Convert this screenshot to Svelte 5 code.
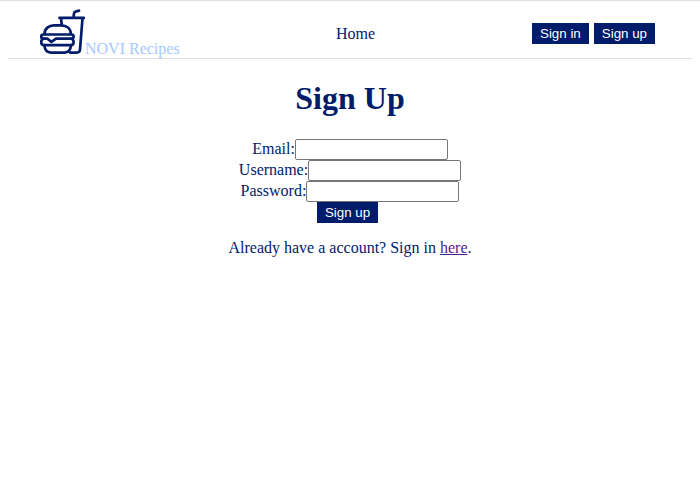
<script>
  const fields = [
    { id: 'email', label: 'Email:', type: 'email' },
    { id: 'username', label: 'Username:', type: 'text' },
    { id: 'password', label: 'Password:', type: 'password' }
  ];
</script>

<div class="page">
  <nav>
    <a class="brand" href="#home">
      <svg width="45" height="45" viewBox="0 0 45 45" aria-hidden="true">
        <path d="M39 1.6 35.6 2.6Q34.1 3.2 33.9 4.8L33.6 8.5M19.5 8.9H44M21 9.5 21.7 15M42.5 9.5 40 40.5Q39.8 43.6 36.8 43.6H30" />
        <path d="M4.5 25C4.5 19.5 9 16.4 14 16.4H21C26.5 16.4 30.8 19.5 30.8 25" />
        <path d="M3.3 25.5H31.5Q33.6 25.5 33.6 27.6T31.5 29.7H16L11.4 32.9 7.5 29.7H3.3Q1.2 29.7 1.2 27.6T3.3 25.5Z" />
        <path d="M3.3 29.7Q1.2 30.4 1.2 33Q1.2 36.2 4.2 36.2H30.7Q33.6 36.2 33.6 33Q33.6 30.4 31.5 29.7" />
        <path d="M4.3 36.2Q5 43.6 11 43.6H24.5Q30.3 43.6 31 36.2" />
      </svg><span>NOVI Recipes</span>
    </a>
    <a class="home" href="#home">Home</a>
    <div class="actions">
      <button>Sign in</button><button>Sign up</button>
    </div>
  </nav>
  <main>
    <h1>Sign Up</h1>
    <form>
      {#each fields as field}
        <div class="row">
          <label for={field.id}>{field.label}</label><input id={field.id} type={field.type} />
        </div>
      {/each}
      <div class="row"><button type="button">Sign up</button></div>
    </form>
    <p>Already have a account? Sign in <a href="#signin">here</a>.</p>
  </main>
</div>

<style>
  .page {
    box-sizing: border-box;
    height: 501px;
    padding: 0 8px;
    border-top: 1px solid #dedede;
    background: #fff;
    color: #001c6b;
    font: 16px/18px "Liberation Serif", serif;
  }
  nav {
    box-sizing: border-box;
    display: flex;
    height: 58px;
    padding: 8px 32px 0;
    border-bottom: 1px solid #dcdfe5;
  }
  .brand {
    display: flex;
    width: 296px;
    color: #a6c8ff;
    text-decoration: none;
  }
  .brand span {
    padding-top: 31px;
  }
  svg {
    flex: none;
    fill: none;
    stroke: #001c6b;
    stroke-width: 2.7;
    stroke-linecap: round;
    stroke-linejoin: round;
  }
  .home {
    padding-top: 16px;
    color: #001c6b;
    text-decoration: none;
  }
  .actions {
    display: flex;
    margin-left: auto;
    padding-top: 14px;
  }
  button {
    box-sizing: border-box;
    height: 21px;
    margin: 0 5px 0 0;
    padding: 0 8px;
    border: 0;
    background: #001c6b;
    color: #fff;
    font: 13.333px/21px "Liberation Sans", sans-serif;
  }
  h1 {
    margin: 21px 0;
    font-size: 32px;
    line-height: 37px;
    text-align: center;
  }
  form {
    margin-top: 22px;
  }
  .row {
    display: flex;
    justify-content: center;
    height: 21px;
  }
  label {
    padding-top: 1px;
  }
  input {
    box-sizing: border-box;
    width: 153px;
    height: 21px;
    margin: 0;
    border: 1px solid #767676;
    border-radius: 2px;
    background: #fff;
    outline: none;
  }
  p {
    margin: 16px 0;
    text-align: center;
  }
  p a {
    color: #551a8b;
  }
</style>
